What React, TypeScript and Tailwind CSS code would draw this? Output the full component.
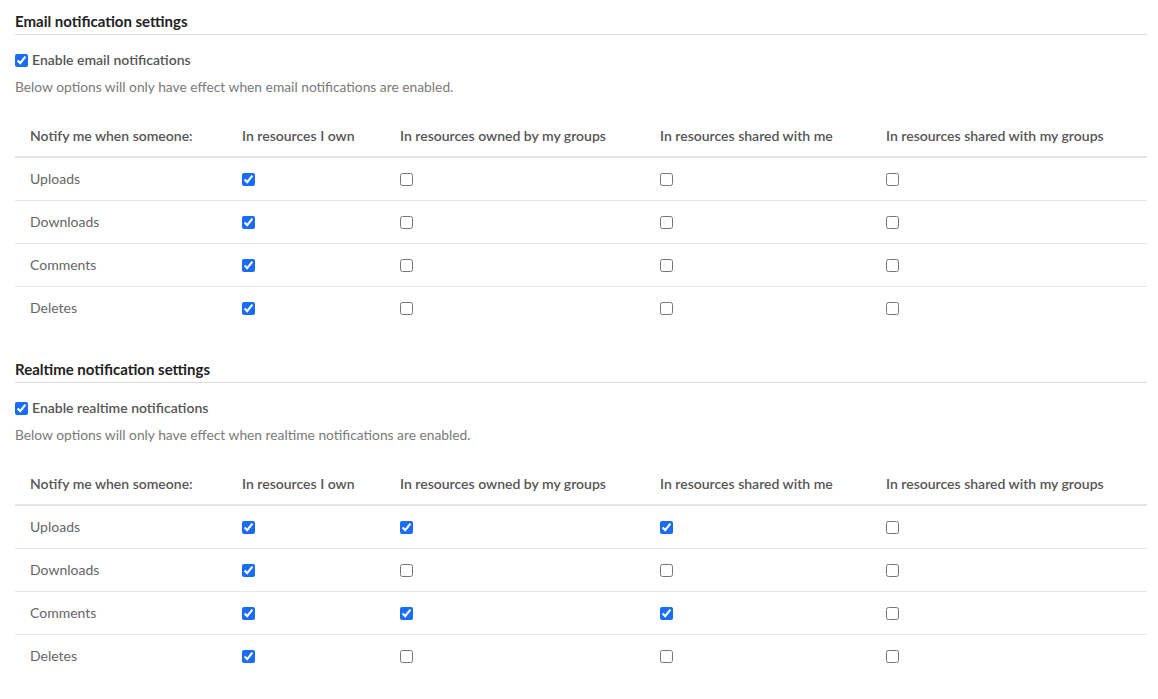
import React from 'react';

const columns = [
    { label: 'Notify me when someone:', width: 'w-[212px]' },
    { label: 'In resources I own', width: 'w-[158px]' },
    { label: 'In resources owned by my groups', width: 'w-[260px]' },
    { label: 'In resources shared with me', width: 'w-[226px]' },
    { label: 'In resources shared with my groups', width: '' },
];

const events = ['Uploads', 'Downloads', 'Comments', 'Deletes'];

interface SectionProps {
    title: string;
    enableLabel: string;
    kind: string;
    values: boolean[][];
}

function Section({ title, enableLabel, kind, values }: SectionProps) {
    return (
        <section className="mb-[30px]">
            <h2 className="text-[15px] leading-5 font-bold text-[#222] pb-[3px] border-b border-[#dcdcdc]">{title}</h2>
            <label className="mt-[15px] flex items-center h-5 text-sm font-semibold text-[#555]">
                <input type="checkbox" defaultChecked className="m-0 mr-[4px] w-[13px] h-[13px] accent-[#1a6cf5]" />
                {enableLabel}
            </label>
            <p className="mt-2 text-[13.8px] leading-[18px] text-[#7a7a7a]">
                Below options will only have effect when {kind} notifications are enabled.
            </p>
            <table className="mt-[20px] w-full border-collapse text-left text-sm text-[#555]">
                <thead>
                    <tr className="border-b-2 border-[#e6e6e6]">
                        {columns.map((c) => (
                            <th
                                key={c.label}
                                className={`${c.width} h-[41px] pl-[15px] font-semibold leading-5 align-middle`}
                            >
                                {c.label}
                            </th>
                        ))}
                    </tr>
                </thead>
                <tbody>
                    {events.map((ev, r) => (
                        <tr key={ev} className={r < events.length - 1 ? 'border-b border-[#e6e6e6]' : ''}>
                            <td className="h-[43px] pl-[15px] align-middle text-[#666]">{ev}</td>
                            {values[r].map((v, c) => (
                                <td key={c} className="h-[43px] pl-[15px] align-middle">
                                    <input
                                        type="checkbox"
                                        defaultChecked={v}
                                        className="m-0 mt-px block w-[13px] h-[13px] accent-[#1a6cf5]"
                                    />
                                </td>
                            ))}
                        </tr>
                    ))}
                </tbody>
            </table>
        </section>
    );
}

export default function App() {
    return (
        <div className="bg-white min-h-screen px-[15px] pt-[11px] pr-[11px] font-['Lato',sans-serif]">
            <Section
                title="Email notification settings"
                enableLabel="Enable email notifications"
                kind="email"
                values={[
                    [true, false, false, false],
                    [true, false, false, false],
                    [true, false, false, false],
                    [true, false, false, false],
                ]}
            />
            <Section
                title="Realtime notification settings"
                enableLabel="Enable realtime notifications"
                kind="realtime"
                values={[
                    [true, true, true, false],
                    [true, false, false, false],
                    [true, true, true, false],
                    [true, false, false, false],
                ]}
            />
        </div>
    );
}
